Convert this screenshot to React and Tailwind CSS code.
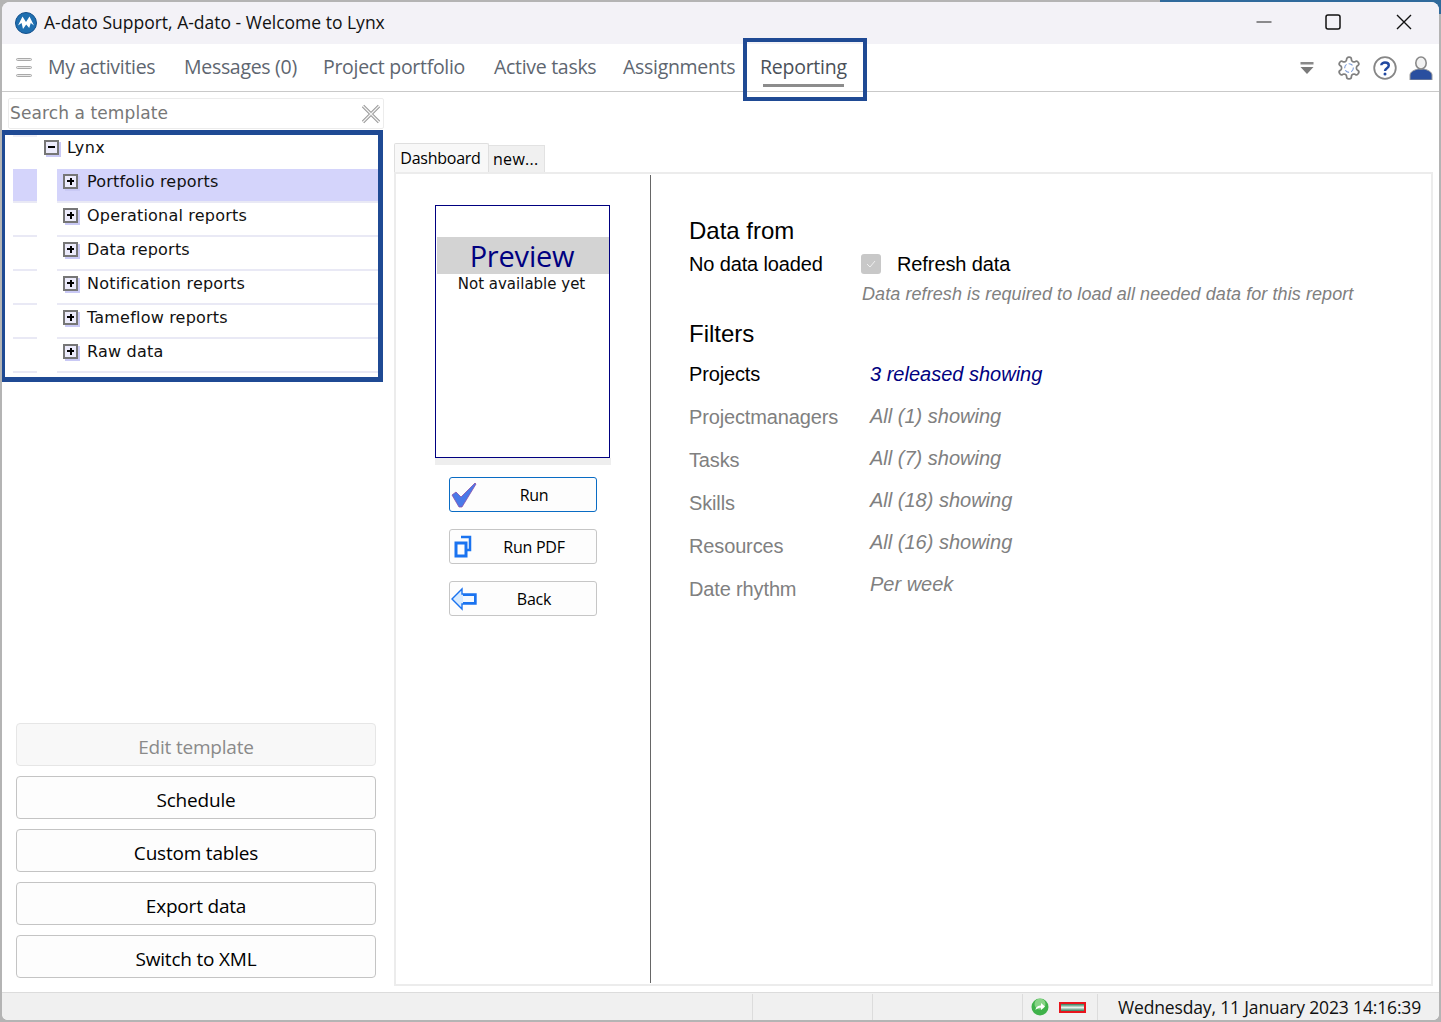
import React from "react";

const ui = "font-['Open_Sans',sans-serif]";
const tree = "font-['DejaVu_Sans',sans-serif]";
const arial = "font-['Liberation_Sans',Arial,sans-serif]";

function Logo() {
  return (
    <svg width="22" height="22" viewBox="0 0 22 22">
      <circle cx="11" cy="11" r="10.5" fill="#1f6fb0" />
      <circle cx="11" cy="11" r="10.5" fill="none" stroke="#14508c" strokeWidth="1" />
      <path d="M3 13.5 L7.5 4.5 L11 10 L14.5 4.5 L19 13.5 L15.8 11 L14.2 16 L11.2 12.5 L8 17 L6.6 11 Z" fill="#ffffff" />
    </svg>
  );
}

function Expander({ minus }) {
  return (
    <span className="relative block w-[15px] h-[15px] shrink-0 bg-[#ecebfb] border-2 border-[#767676] shadow-[2px_2px_0_#c9c9f5]">
      <span className="absolute left-[2px] top-[4.5px] w-[7px] h-[2px] bg-black" />
      {!minus && <span className="absolute left-[4.5px] top-[2px] w-[2px] h-[7px] bg-black" />}
    </span>
  );
}

function TreeRow({ label, selected }) {
  return (
    <div className="flex h-[34px] pl-[8px]">
      <div className={`w-[24px] border-b-2 border-[#e9e9f5] ${selected ? "bg-[#d4d4fb]" : ""}`} />
      <div className={`ml-[20px] flex-1 flex items-center pl-[6px] pb-[8px] gap-[9px] border-b-2 border-[#e9e9f5] ${selected ? "bg-[#d4d4fb]" : ""}`}>
        <Expander />
        <span className={`${tree} relative top-[1px] text-[16px] tracking-[0.2px] text-[#111]`}>{label}</span>
      </div>
    </div>
  );
}

function SideButton({ label, disabled }) {
  return (
    <button className={`${ui} h-[43px] w-full rounded-[4px] border pt-[5px] text-[19px] leading-[26px] tracking-[-0.2px] ${disabled ? "border-[#e6e6e6] bg-[#f8f8f8] text-[#8a8a8a]" : "border-[#c4c4c4] bg-[#fdfdfd] text-black"}`}>
      {label}
    </button>
  );
}

function RunButton({ icon, label, active }) {
  return (
    <button className={`${ui} flex items-center h-[35px] w-[148px] rounded-[3px] border pl-[1px] pr-[7px] bg-[#fdfdfd] text-[16px] tracking-[-0.25px] text-black ${active ? "border-[#0a6cc4]" : "border-[#c6c6c6]"}`}>
      <span className="w-[28px] flex justify-start">{icon}</span>
      <span className="flex-1 text-center pt-[1px]">{label}</span>
    </button>
  );
}

const Check = (
  <svg width="26" height="26" viewBox="0 0 26 26">
    <path d="M1 13 L5 10 L10 15 L24 1 L25 2 L11 25 L8 25 Z" fill="#4a79e8" stroke="#8a4fa8" strokeWidth="0.8" />
  </svg>
);
const Pdf = (
  <svg width="26" height="24" viewBox="0 0 26 24">
    <path d="M10 2 H19 V15 H15" fill="none" stroke="#1a73f0" strokeWidth="2.5" />
    <rect x="5" y="8" width="10" height="13" fill="none" stroke="#1a73f0" strokeWidth="3" />
  </svg>
);
const Back = (
  <svg width="26" height="24" viewBox="0 0 26 24">
    <path d="M1 12 L11 2 V7 H25 V17 H11 V22 Z" fill="#d8ebff" stroke="#1a73f0" strokeWidth="1.4" />
    <path d="M12 8 H24 V16 H12" fill="#f4f9ff" stroke="#1a73f0" strokeWidth="2" />
  </svg>
);

const navItems = [
  ["My activities", "w-[136px]"],
  ["Messages (0)", "w-[139px]"],
  ["Project portfolio", "w-[171px]"],
  ["Active tasks", "w-[129px]"],
  ["Assignments", "w-[137px]"],
];

const labels = ["Projects", "Projectmanagers", "Tasks", "Skills", "Resources", "Date rhythm"];
const values = ["3 released showing", "All (1) showing", "All (7) showing", "All (18) showing", "All (16) showing", "Per week"];

export default function App() {
  return (
    <div className="relative w-[1441px] h-[1022px] overflow-hidden bg-[#b4b4b4] pl-[2px] pt-[2px] pb-[2px]">
      <div className="absolute top-0 right-0 w-[281px] h-[14px] bg-[#2f6a9c]" />
      <div className="relative flex flex-col w-[1437px] h-[1018px] rounded-t-[8px] rounded-b-[6px] overflow-hidden bg-white">
        {/* title bar */}
        <div className="flex items-center h-[42px] shrink-0 bg-[#f3f2f7]">
          <div className="ml-[13px]"><Logo /></div>
          <span className={`${ui} ml-[7px] -mt-[2px] text-[17.5px] text-[#111]`}>A-dato Support, A-dato - Welcome to Lynx</span>
          <div className="ml-auto flex items-center -mt-[2px]">
            <svg width="16" height="16" viewBox="0 0 16 16"><path d="M0.5 8 H15.5" stroke="#222" strokeWidth="1.2" /></svg>
            <svg className="ml-[53px]" width="16" height="16" viewBox="0 0 16 16"><rect x="1" y="1" width="14" height="14" rx="2" fill="none" stroke="#111" strokeWidth="1.5" /></svg>
            <svg className="ml-[55px] mr-[27px]" width="16" height="16" viewBox="0 0 16 16"><path d="M1 1 L15 15 M15 1 L1 15" stroke="#111" strokeWidth="1.4" /></svg>
          </div>
        </div>
        {/* nav */}
        <div className="relative flex items-center h-[48px] shrink-0 border-b border-[#c9c9c9]">
          <div className="ml-[14px] w-[32px] flex flex-col gap-[5px]">
            <span className="block w-[16px] h-[3px] rounded-[2px] border border-[#a9a9a9] bg-[#e8e8e8]" />
            <span className="block w-[16px] h-[3px] rounded-[2px] border border-[#a9a9a9] bg-[#e8e8e8]" />
            <span className="block w-[16px] h-[3px] rounded-[2px] border border-[#a9a9a9] bg-[#e8e8e8]" />
          </div>
          {navItems.map(([t, w]) => (
            <span key={t} className={`${ui} ${w} -mt-[2px] text-[19.5px] tracking-[-0.3px] text-[#5e6670] whitespace-nowrap`}>{t}</span>
          ))}
          <span className={`${ui} relative -mt-[2px] text-[19.5px] tracking-[-0.25px] text-[#4a5058] whitespace-nowrap`}>
            Reporting
            <span className="absolute left-[3px] right-[3px] bottom-[-6px] h-[3px] bg-[#8c8c8c]" />
          </span>
          {/* annotation around the active tab */}
          <div className="absolute left-[741px] top-[-6px] w-[124px] h-[63px] border-4 border-[#1f4a94]" />
          <div className="ml-auto flex items-center">
            <svg width="16" height="14" viewBox="0 0 16 14">
              <rect x="1.5" y="1" width="13" height="2.5" fill="#8a8a8a" />
              <path d="M1.5 6 H14.5 L8 13 Z" fill="#7a7a7a" />
            </svg>
            <svg className="ml-[21px]" width="26" height="26" viewBox="0 0 24 24" fill="none">
              <path d="M12.22 2h-.44a2 2 0 0 0-2 2v.18a2 2 0 0 1-1 1.73l-.43.25a2 2 0 0 1-2 0l-.15-.08a2 2 0 0 0-2.73.73l-.22.38a2 2 0 0 0 .73 2.73l.15.1a2 2 0 0 1 1 1.72v.51a2 2 0 0 1-1 1.74l-.15.09a2 2 0 0 0-.73 2.73l.22.38a2 2 0 0 0 2.73.73l.15-.08a2 2 0 0 1 2 0l.43.25a2 2 0 0 1 1 1.73V20a2 2 0 0 0 2 2h.44a2 2 0 0 0 2-2v-.18a2 2 0 0 1 1-1.73l.43-.25a2 2 0 0 1 2 0l.15.08a2 2 0 0 0 2.73-.73l.22-.39a2 2 0 0 0-.73-2.73l-.15-.08a2 2 0 0 1-1-1.74v-.5a2 2 0 0 1 1-1.74l.15-.09a2 2 0 0 0 .73-2.73l-.22-.38a2 2 0 0 0-2.73-.73l-.15.08a2 2 0 0 1-2 0l-.43-.25a2 2 0 0 1-1-1.73V4a2 2 0 0 0-2-2z" stroke="#808080" strokeWidth="1.6" />
              <circle cx="12" cy="12" r="4" stroke="#7a9ad8" strokeWidth="1" strokeDasharray="4 2" />
            </svg>
            <svg className="ml-[11px]" width="24" height="24" viewBox="0 0 24 24">
              <circle cx="12" cy="12" r="10.8" fill="#fff" stroke="#868686" strokeWidth="1.8" />
              <path d="M8.3 9.3 C8.3 5.6 15.8 5.6 15.8 9.5 C15.8 12.3 12 12.2 12 15" fill="none" stroke="#2148a0" strokeWidth="2.4" />
              <circle cx="12" cy="18" r="1.5" fill="#2148a0" />
            </svg>
            <svg className="ml-[12px] mr-[6px]" width="24" height="24" viewBox="0 0 24 24">
              <path d="M1 24 V19 C1 16 5 14 9 13 H15 C19 14 23 16 23 19 V24 Z" fill="#2a4f9f" stroke="#9a9a9a" strokeWidth="1" />
              <ellipse cx="12" cy="7" rx="5.2" ry="6" fill="#f2f2f2" stroke="#8a8a8a" strokeWidth="1.6" />
            </svg>
          </div>
        </div>
        {/* main */}
        <div className="flex flex-1 min-h-0">
          <aside className="flex flex-col w-[392px] shrink-0 pt-[6px] pb-[14px]">
            <div className="flex items-center ml-[6px] w-[376px] h-[31px] border border-[#ececec] rounded-[2px] pl-[1px] pr-[2px]">
              <span className={`${tree} text-[17px] tracking-[0.1px] text-[#777]`}>Search a template</span>
              <svg className="ml-auto" width="20" height="20" viewBox="0 0 20 20">
                <path d="M2 2 L18 18 M18 2 L2 18" stroke="#9a9a9a" strokeWidth="3.2" />
                <path d="M2 2 L18 18 M18 2 L2 18" stroke="#f4f4f4" strokeWidth="1.2" />
              </svg>
            </div>
            <div className="-ml-[2px] mt-[1px] w-[383px] h-[252px] border-[5px] border-[#1f4a94] bg-white">
              <div className="flex h-[34px] pl-[8px]">
                <div className="w-[24px] self-start h-[2px] bg-[#efeff7]" />
                <div className="ml-[7px] flex items-center gap-[8px] pb-[10px]">
                  <Expander minus />
                  <span className={`${tree} text-[16px] tracking-[0.4px] text-[#111] relative top-[1px]`}>Lynx</span>
                </div>
              </div>
              <TreeRow label="Portfolio reports" selected />
              <TreeRow label="Operational reports" />
              <TreeRow label="Data reports" />
              <TreeRow label="Notification reports" />
              <TreeRow label="Tameflow reports" />
              <TreeRow label="Raw data" />
            </div>
            <div className="mt-auto ml-[14px] w-[360px] flex flex-col gap-[10px]">
              <SideButton label="Edit template" disabled />
              <SideButton label="Schedule" />
              <SideButton label="Custom tables" />
              <SideButton label="Export data" />
              <SideButton label="Switch to XML" />
            </div>
          </aside>
          <section className="flex flex-col flex-1 min-w-0 pt-[51px] pb-[6px] pr-[6px]">
            <div className="flex items-end h-[29px] shrink-0">
              <div className={`${ui} flex items-center justify-center w-[95px] h-[29px] bg-[#f8f8f8] border border-b-0 border-[#dfdfdf] rounded-t-[2px] text-[16px] tracking-[-0.25px] text-black pr-[2px]`}>Dashboard</div>
              <div className={`${ui} flex items-center pl-[4px] w-[56px] h-[27px] bg-[#f0f0f0] border border-l-0 border-b-0 border-[#e2e2e2] text-[16px] tracking-[0.3px] text-black`}>new...</div>
            </div>
            <div className="flex flex-1 border-2 border-[#ececec] bg-white">
              <div className="w-[255px] shrink-0 border-r border-[#666] my-px pl-[39px] pt-[30px]">
                <div className="w-[175px] h-[253px] border border-[#000080] pt-[31px] pl-px">
                  <div className={`${ui} h-[37px] bg-[#d3d3d3] text-center text-[#000080] text-[29px] leading-[37px] tracking-[-0.2px] pr-[2px]`}>Preview</div>
                  <div className={`${tree} text-center text-[15px] leading-[20px] text-[#111] pr-[3px]`}>Not available yet</div>
                </div>
                <div className="w-[176px] h-[7px] bg-[#eeeeee]" />
                <div className="ml-[14px] mt-[12px] flex flex-col gap-[17px]">
                  <RunButton icon={Check} label="Run" active />
                  <RunButton icon={Pdf} label="Run PDF" />
                  <RunButton icon={Back} label="Back" />
                </div>
              </div>
              <div className={`${arial} flex-1 pl-[38px] pt-[41px]`}>
                <div className="h-[32px] text-[24px] leading-[32px] text-black">Data from</div>
                <div className="flex items-center h-[28px] mt-[3px]">
                  <span className="w-[173px] text-[20px] tracking-[-0.14px] text-black">No data loaded</span>
                  <span className="flex items-center justify-center w-[20px] h-[20px] rounded-[3px] bg-[#c8c8c8] -mt-[1px] -ml-[1px]">
                    <svg width="12" height="12" viewBox="0 0 12 12"><path d="M2 6 L5 9 L10 3" fill="none" stroke="#efefef" strokeWidth="1" /></svg>
                  </span>
                  <span className="ml-[16px] text-[20px] tracking-[-0.1px] text-black -mt-[1px]">Refresh data</span>
                </div>
                <div className="h-[24px] mt-[4px] ml-[173px] text-[18px] tracking-[0.08px] leading-[24px] italic text-[#808080] whitespace-nowrap">Data refresh is required to load all needed data for this report</div>
                <div className="h-[32px] mt-[12px] text-[24px] leading-[32px] text-black">Filters</div>
                <div className="grid grid-cols-[181px_1fr] mt-[3px]">
                  <div className="flex flex-col -mt-[1px]">
                    {labels.map((l, i) => (
                      <span key={l} className={`flex items-center h-[43px] text-[20px] tracking-[-0.14px] ${i === 0 ? "text-black" : "text-[#808080]"}`}>{l}</span>
                    ))}
                  </div>
                  <div className="flex flex-col">
                    {values.map((v, i) => (
                      <span key={v} className={`flex items-center h-[42px] text-[20px] italic ${i === 0 ? "text-[#000080]" : "text-[#808080]"}`}>{v}</span>
                    ))}
                  </div>
                </div>
              </div>
            </div>
          </section>
        </div>
        {/* status */}
        <div className="flex items-stretch h-[28px] shrink-0 bg-[#f0f0f0] border-t border-[#dcdcdc] pt-[1px]">
          <div className="w-[751px] border-r border-[#dcdcdc]" />
          <div className="w-[120px] border-r border-[#dcdcdc]" />
          <div className="w-[150px] border-r border-[#dcdcdc]" />
          <div className="flex items-center w-[75px] border-r border-[#dcdcdc] pl-[8px] gap-[10px]">
            <svg width="18" height="18" viewBox="0 0 18 18">
              <circle cx="9" cy="9" r="8.5" fill="#3fb24a" />
              <circle cx="9" cy="6" r="5.5" fill="#a6e29f" opacity="0.7" />
              <path d="M4.5 12 C5 8.5 7.5 7.5 10 7.5 V5 L14 8.5 L10 12 V9.7 C8 9.7 6 10.3 4.5 12 Z" fill="#fff" />
            </svg>
            <span className="block w-[27px] h-[11px] border-2 border-[#e8141c] bg-[linear-gradient(180deg,#2f7d58_0%,#e8f2ec_50%,#2f7d58_100%)]" />
          </div>
          <div className={`${ui} flex-1 pl-[20px] flex items-center text-[17.5px] tracking-[-0.15px] text-[#111] whitespace-nowrap`}>Wednesday, 11 January 2023 14:16:39</div>
        </div>
      </div>
    </div>
  );
}
